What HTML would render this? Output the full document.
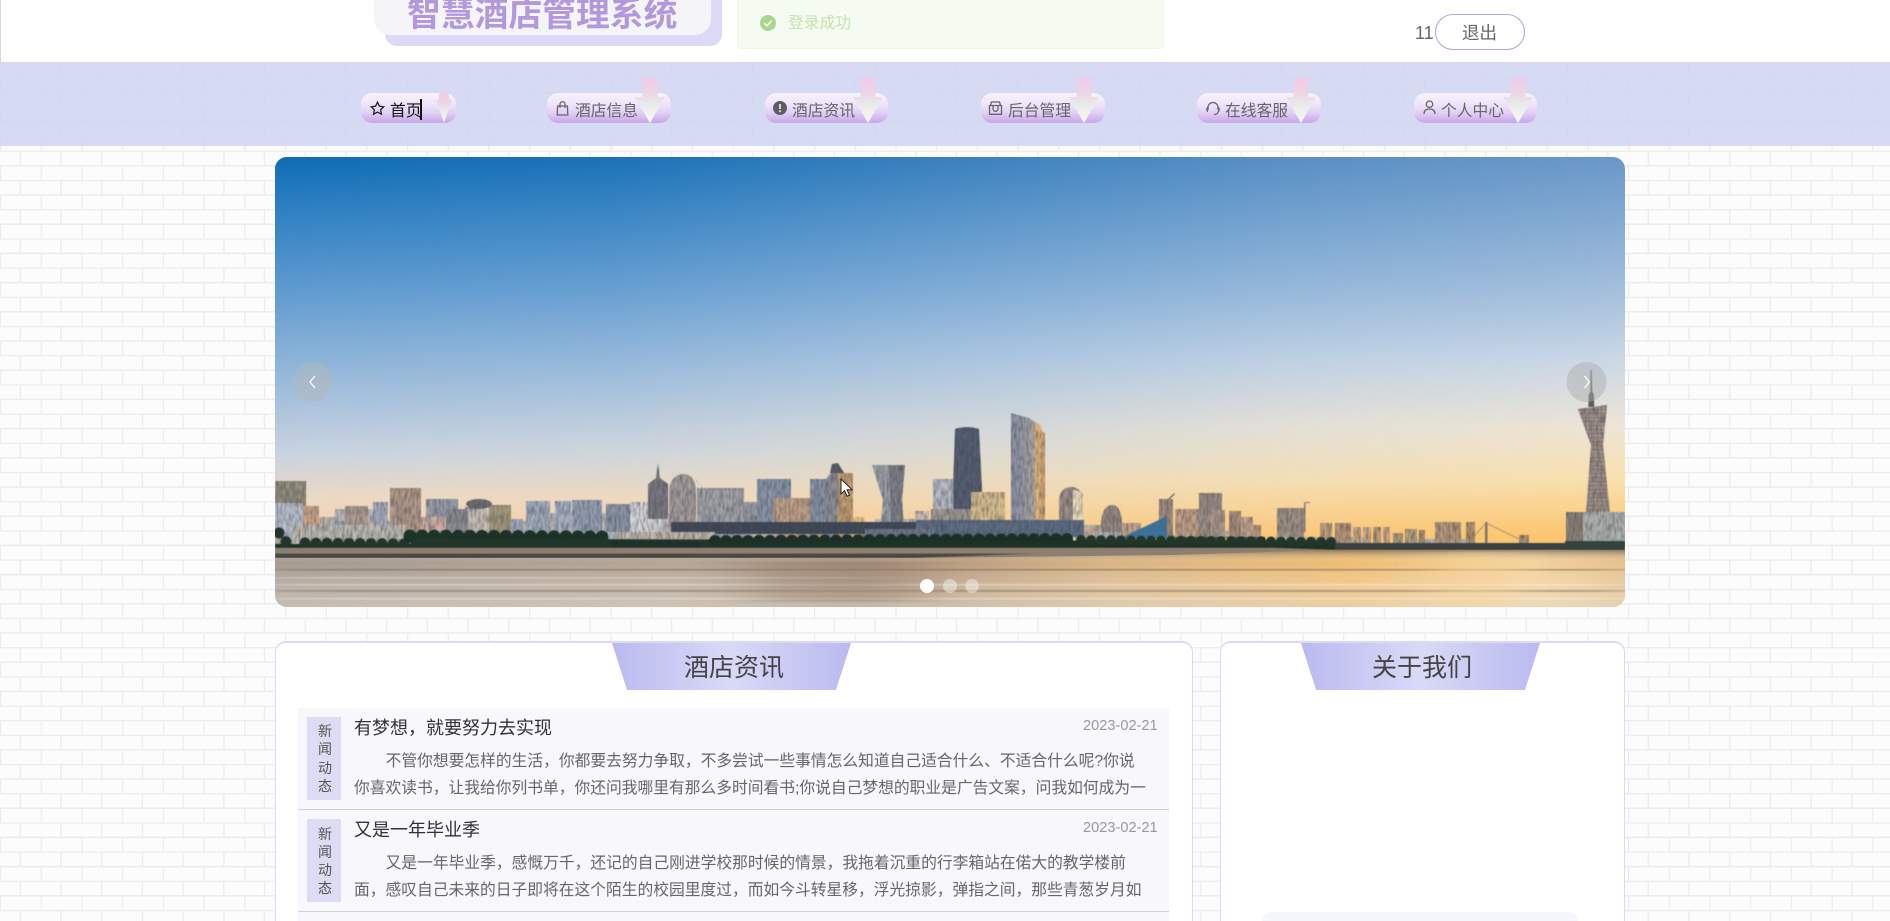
<!DOCTYPE html>
<html lang="zh-CN"><head><meta charset="utf-8"><title>智慧酒店管理系统</title>
<style>
*{box-sizing:border-box}
html,body{margin:0;padding:0;width:1890px;height:921px;overflow:hidden;background:#fcfcfc}
body{position:relative;font-family:"Liberation Sans","Noto Sans CJK SC",sans-serif;color:#666}
.a{position:absolute}
.t{position:absolute;white-space:nowrap;line-height:1}
.pill{position:absolute;top:93px;height:30px;border-radius:11px;background:linear-gradient(180deg,#f8f2fd 0%,#f0e6fb 35%,#e2d0f5 65%,#c6a6e8 100%)}
.arrow{position:absolute;top:78px;width:30px;height:45px;clip-path:polygon(25% 0,75% 0,75% 42%,100% 42%,50% 100%,0 42%,25% 42%);background:linear-gradient(180deg,#f0cbe7 0%,#ecd6e6 35%,#e8e8e8 55%,#f8fbf8 100%);border-radius:6px}
.ic{position:absolute;fill:none;stroke:#666;stroke-width:1.3}
.nt{position:absolute;top:104px;font-size:15.75px;line-height:16px;white-space:nowrap;color:#666}
.card{position:absolute;top:641px;height:300px;background:#fff;border:1px solid #dcd9f3;border-top:2px solid #dcd9f3;border-radius:11px}
.trap{position:absolute;top:643px;height:47px}
.ttl{position:absolute;top:654px;font-size:25px;line-height:28px;color:#444;white-space:nowrap;transform:translateX(-50%)}
.row{position:absolute;left:298px;width:871px;background:#f7f7fc;border-bottom:1px solid #cfcfd6}
.badge{position:absolute;left:307px;width:34px;background:#dcdcf5}
.bt{position:absolute;left:318px;width:14px;font-size:14px;line-height:14px;color:#555}
.h{position:absolute;left:354px;font-size:18px;line-height:20px;color:#333;white-space:nowrap}
.d{position:absolute;left:1083px;font-size:14.6px;line-height:16px;color:#999;white-space:nowrap}
.p{position:absolute;left:354px;font-size:15.75px;line-height:18px;color:#666;white-space:nowrap}
.dot{position:absolute;top:579px;width:14px;height:14px;border-radius:50%;background:rgba(255,255,255,.42)}
</style></head><body>

<!-- brick background -->
<svg class="a" style="left:0;top:0" width="1890" height="921">
<defs>
<pattern id="br" patternUnits="userSpaceOnUse" x="0" y="4.7" width="40.7" height="29.2"><path d="M0 .5H40.7M0 15.1H40.7M20.35 0V14.6M.5 14.6V29.2" fill="none" stroke="#ececec" stroke-width="1.4"/></pattern>
<pattern id="br2" patternUnits="userSpaceOnUse" x="0" y="4.7" width="40.7" height="29.2"><path d="M0 .5H40.7M0 15.1H40.7M20.35 0V14.6M.5 14.6V29.2" fill="none" stroke="#d3d7f0" stroke-width="1"/></pattern>
</defs>
<rect x="0" y="146" width="1890" height="775" fill="#fcfcfc"/>
<rect x="0" y="146" width="1890" height="775" fill="url(#br)"/>
<rect x="0" y="0" width="1890" height="62" fill="#fff"/>
<rect x="0" y="0" width="1" height="62" fill="#ddd"/>
<rect x="0" y="62" width="1890" height="84" fill="#d6daf2"/>
<rect x="0" y="62" width="1890" height="84" fill="url(#br2)"/>
</svg>

<!-- header -->
<div class="a" style="left:385px;top:-20px;width:337px;height:66px;background:#dcdaf6;border-radius:0 0 12px 12px"></div>
<div class="a" style="left:374px;top:-20px;width:337px;height:55px;background:#f5f5f8;border-radius:0 0 16px 16px"></div>
<div class="t" style="left:407px;top:-2px;font-size:33.8px;line-height:34px;font-weight:700;color:#b298dc">智慧酒店管理系统</div>
<div class="a" style="left:737px;top:-20px;width:427px;height:69px;background:#f5fbf1;border:1px solid #eef8e8;border-radius:4px"></div>
<svg class="a" style="left:760px;top:15px" width="16" height="16" viewBox="0 0 16 16"><circle cx="8" cy="8" r="8" fill="#a9d68e"/><path d="M4.3 8.2l2.6 2.6 4.8-5" fill="none" stroke="#f2faec" stroke-width="1.7"/></svg>
<div class="t" style="left:788px;top:16px;font-size:15.8px;line-height:16px;color:#c2e3b1">登录成功</div>
<div class="t" style="left:1415px;top:23px;font-size:18px;line-height:20px;color:#666">11</div>
<div class="a" style="left:1435px;top:14px;width:90px;height:36px;border:1px solid #b3a2d2;border-radius:18px;background:#fff"></div>
<div class="t" style="left:1462px;top:23px;font-size:17.5px;line-height:20px;color:#666">退出</div>

<!-- nav -->
<div class="pill" style="left:361px;width:95px"></div>
<div class="pill" style="left:547px;width:124px"></div>
<div class="pill" style="left:765px;width:123px"></div>
<div class="pill" style="left:981px;width:124px"></div>
<div class="pill" style="left:1197px;width:124px"></div>
<div class="pill" style="left:1414px;width:123px"></div>

<svg class="ic" style="left:370px;top:101px;stroke:#222" width="15" height="15" viewBox="0 0 15 15"><path d="M7.5 1.2l1.9 4 4.3.6-3.1 3 .8 4.4-3.9-2.1-3.9 2.1.8-4.4-3.1-3 4.3-.6z"/></svg>
<div class="nt" style="left:390px;color:#111">首页</div>
<div class="a" style="left:420px;top:99px;width:2px;height:21px;background:#111"></div>

<svg class="ic" style="left:556px;top:101px" width="13" height="15" viewBox="0 0 13 15"><path d="M1.6 5h9.8l.4 9H1.2zM4 7V3.2a2.5 2.5 0 0 1 5 0V7"/></svg>
<div class="nt" style="left:575px">酒店信息</div>

<svg class="a" style="left:773px;top:101px" width="14" height="14" viewBox="0 0 14 14"><circle cx="7" cy="7" r="7" fill="#5f5f63"/><path d="M7 3v5" stroke="#eee" stroke-width="1.7"/><circle cx="7" cy="10.3" r="1" fill="#eee"/></svg>
<div class="nt" style="left:792px">酒店资讯</div>

<svg class="ic" style="left:988px;top:101px" width="15" height="14" viewBox="0 0 15 14"><path d="M1.5 4.5h12v8.800h-12zM2.500 4.500l1-3.500h8l1 3.500M5 4.500v3.300a2.500 2.500 0 0 0 5 0V4.500"/></svg>
<div class="nt" style="left:1008px">后台管理</div>

<svg class="ic" style="left:1206px;top:101px" width="14" height="15" viewBox="0 0 14 15"><path d="M2 9V6.500a5 5 0 0 1 10 0V9M2 6.500c-1.500 0-1.500 4 0 4M12 6.500c1.500 0 1.500 4 0 4M12 10.500c0 2-2 3-4 3"/></svg>
<div class="nt" style="left:1225px">在线客服</div>

<svg class="ic" style="left:1423px;top:100px" width="13" height="15" viewBox="0 0 13 15"><circle cx="6.500" cy="4.200" r="3.200"/><path d="M1 14c0-3.500 2-5 5.500-5s5.500 1.500 5.500 5"/></svg>
<div class="nt" style="left:1441px">个人中心</div>

<div class="arrow" style="left:436px;top:93px;width:16px;height:30px;clip-path:polygon(18% 0,82% 0,82% 22%,100% 22%,50% 100%,0 22%,18% 22%)"></div>
<div class="arrow" style="left:635px"></div>
<div class="arrow" style="left:853px"></div>
<div class="arrow" style="left:1069px"></div>
<div class="arrow" style="left:1286px"></div>
<div class="arrow" style="left:1503px"></div>

<!-- hero -->
<svg class="a" style="left:275px;top:157px;border-radius:12px" width="1350" height="450" viewBox="0 0 1350 450">
<defs>
<linearGradient id="skL" x1="0" y1="0" x2="0" y2="1"><stop offset="0" stop-color="#0e6cb4"/><stop offset=".12" stop-color="#2f80c2"/><stop offset=".3" stop-color="#609bd0"/><stop offset=".5" stop-color="#9abada"/><stop offset=".66" stop-color="#c9d3e0"/><stop offset=".76" stop-color="#ecd8c4"/><stop offset=".86" stop-color="#f7cfa0"/></linearGradient>
<linearGradient id="skR" x1="0" y1="0" x2="0" y2="1"><stop offset="0" stop-color="#6b98c9"/><stop offset=".12" stop-color="#81a8d1"/><stop offset=".3" stop-color="#a5c0dd"/><stop offset=".45" stop-color="#cbd8e7"/><stop offset=".6" stop-color="#eee5d6"/><stop offset=".72" stop-color="#f9e0ae"/><stop offset=".84" stop-color="#fcc66e"/></linearGradient>
<linearGradient id="hm" x1="0" y1="0" x2="1" y2="0"><stop offset="0" stop-color="#000"/><stop offset=".25" stop-color="#333"/><stop offset=".75" stop-color="#ddd"/><stop offset="1" stop-color="#fff"/></linearGradient>
<mask id="mk"><rect width="1350" height="450" fill="url(#hm)"/></mask>
<linearGradient id="wa" x1="0" y1="0" x2="1" y2="0"><stop offset="0" stop-color="#a59a90"/><stop offset=".3" stop-color="#b5a594"/><stop offset=".43" stop-color="#a68f7c"/><stop offset=".62" stop-color="#d9b484"/><stop offset=".8" stop-color="#f0bd72"/><stop offset=".93" stop-color="#f5d29a"/><stop offset="1" stop-color="#e5c08a"/></linearGradient>
<linearGradient id="wv" x1="0" y1="0" x2="0" y2="1"><stop offset="0" stop-color="#3a3530" stop-opacity=".5"/><stop offset=".22" stop-color="#fff" stop-opacity="0"/><stop offset="1" stop-color="#e8e0d4" stop-opacity=".5"/></linearGradient>
<linearGradient id="tw" x1="0" y1="0" x2="1" y2="0"><stop offset="0" stop-color="#8a92a6"/><stop offset=".6" stop-color="#a8a4a6"/><stop offset=".78" stop-color="#edbf7c"/><stop offset="1" stop-color="#c89a70"/></linearGradient>
<filter id="bl" filterUnits="userSpaceOnUse" x="-100" y="380" width="1550" height="80"><feGaussianBlur stdDeviation="28 .5"/></filter>
<filter id="nz" filterUnits="userSpaceOnUse" x="0" y="200" width="1350" height="210" color-interpolation-filters="sRGB">
<feTurbulence type="fractalNoise" baseFrequency="0.5 0.12" numOctaves="2" seed="4" result="n"/>
<feColorMatrix in="n" type="matrix" values="0 0 0 0 0.2  0 0 0 0 0.22  0 0 0 0 0.28  1.1 0 0 0 -0.38" result="d"/>
<feComposite in="d" in2="SourceAlpha" operator="in" result="dd"/>
<feMerge result="m"><feMergeNode in="SourceGraphic"/><feMergeNode in="dd"/></feMerge>
<feGaussianBlur in="m" stdDeviation=".55"/>
</filter>
<filter id="b2"><feGaussianBlur stdDeviation=".45"/></filter>
<pattern id="win" patternUnits="userSpaceOnUse" width="4" height="4"><rect width="4" height="1.2" fill="#000" opacity=".14"/><rect width="1" height="4" fill="#fff" opacity=".08"/></pattern>
</defs>
<rect width="1350" height="450" fill="url(#skR)"/>
<rect width="1350" height="450" fill="url(#skL)" mask="url(#mk)" transform="scale(-1 1) translate(-1350 0)"/>

<g filter="url(#nz)">
<!-- low dense base -->
<path d="M0 375V360h60v-8h50v12h150v-8h140v10h200v-4h120v6h130v10h60v-4h60v10h30v-4h90v8h50v-6h60v10h40v-4h50v20H0z" fill="#b5b4b8" opacity=".85"/>
<!-- far buildings -->
<rect x="44" y="362" width="12" height="20" fill="#c6b5a8"/><rect x="60" y="364" width="10" height="20" fill="#9ea4b2"/><rect x="70" y="349" width="23" height="34" fill="#b4a092"/>
<rect x="98" y="345" width="15" height="38" fill="#a9b0c0"/>
<rect x="151" y="342" width="32" height="46" fill="#9aa1ad"/><rect x="190" y="350" width="12" height="40" fill="#8e8f96"/>
<rect x="205" y="352" width="12" height="36" fill="#d4c8b8"/><rect x="214" y="348" width="22" height="38" fill="#a69a7b"/><rect x="236" y="362" width="12" height="26" fill="#a3afc0"/>
<rect x="251" y="344" width="24" height="50" fill="#a4aebd"/><rect x="280" y="344" width="16" height="50" fill="#a9b3c3"/><rect x="297" y="343" width="30" height="50" fill="#98a2b3"/><rect x="331" y="347" width="24" height="46" fill="#8f98a8"/><rect x="355" y="345" width="32" height="40" fill="#d8d8d8"/>
<rect x="240" y="375" width="130" height="18" fill="#b5bfcf"/>
<rect x="0" y="324" width="31" height="50" fill="#96907e"/>
<rect x="0" y="346" width="28" height="34" fill="#bcc3cf"/><rect x="28" y="349" width="16" height="30" fill="#d2a98b"/>
<rect x="115" y="331" width="31" height="60" fill="#b39b8a"/><rect x="146" y="360" width="25" height="30" fill="#d1b2a4"/>
<rect x="171" y="352" width="22" height="38" fill="#8d8d90"/><rect x="193" y="352" width="12" height="36" fill="#c8c0b4"/><ellipse cx="204" cy="347" rx="13" ry="5" fill="#6f6e72"/>
<path d="M373 362V327l8-6 2-15 2 15 8 6v35z" fill="#7d7a80"/>
<path d="M394 370V336c0-13 7-19 14-19 9 0 13 7 13 19v34z" fill="#a79e9c"/><path d="M421 322l8 10h-8z" fill="#efe9dd"/>
<rect x="422" y="331" width="47" height="56" fill="#a3a4a8"/>
<rect x="469" y="345" width="14" height="30" fill="#9a9da6"/>
<rect x="482" y="322" width="34" height="50" fill="#8b97a8"/>
<rect x="498" y="341" width="57" height="42" fill="#c3a388"/>
<rect x="535" y="322" width="16" height="50" fill="#8a95a6"/>
<path d="M551 380V322l12-15 10 14 5 2v57z" fill="#8e9096"/><path d="M563 316h15v64h-15z" fill="#c9a16e"/><path d="M557 307l6-1 6 10h-14z" fill="#5d5f68"/>
<rect x="578" y="360" width="12" height="18" fill="#f0c684"/><rect x="585" y="368" width="22" height="14" fill="#c5a58e"/>
<path d="M597 308h33l-3 35 2 28-24 2 3-30z" fill="#9fa1a7"/><path d="M614 308h16l-3 35 2 28-13 1z" fill="#7f8288"/>
<rect x="640" y="354" width="14" height="28" fill="#d0c1b5"/>
<rect x="658" y="322" width="33" height="50" fill="#b8bdc5"/>
<path d="M680 272c8-3 18-2 24 0l3 60 1 44h-29l-1-44z" fill="#565f70"/>
<rect x="656" y="352" width="42" height="36" fill="#a39a93"/>
<rect x="696" y="335" width="34" height="52" fill="#dcc08e"/>
<path d="M736 256l18 5 12 8 1 6 3 1v110h-34z" fill="url(#tw)"/>
<rect x="728" y="368" width="50" height="20" fill="#c8b5a2"/>
<path d="M784 344c0-10 6-14 12-14s12 4 12 14v42h-24z" fill="#9f9088"/><path d="M798 332l10 4v50h-10z" fill="#f3e2bf"/>
<rect x="808" y="370" width="18" height="16" fill="#c9b39d"/>
<path d="M826 370c0-16 5-22 11-22s10 6 10 22v26h-21z" fill="#9a8a80"/>
<rect x="847" y="366" width="19" height="24" fill="#c5a98e"/>
<rect x="884" y="342" width="14" height="44" fill="#a6907f"/><path d="M893 342l6-6 1 1-6 6" fill="#777"/>
<rect x="900" y="352" width="25" height="36" fill="#c4a286"/>
<rect x="924" y="336" width="23" height="54" fill="#9c8f84"/><rect x="936" y="353" width="14" height="36" fill="#b09c8c"/>
<rect x="954" y="354" width="12" height="36" fill="#ae8f78"/><rect x="966" y="360" width="12" height="28" fill="#c6a78c"/><rect x="978" y="368" width="8" height="18" fill="#c09d7e"/>
<rect x="1002" y="351" width="27" height="36" fill="#a49486"/><path d="M1029 345h1.5v30h-1.5zM1029 345h6v1h-6z" fill="#a08d7a"/>
<rect x="1045" y="366" width="12" height="24" fill="#c4a27e"/><rect x="1060" y="366" width="16" height="24" fill="#b89878"/>
<rect x="1078" y="370" width="8" height="20" fill="#c9a680"/><rect x="1088" y="370" width="8" height="20" fill="#d0ae88"/><rect x="1098" y="370" width="8" height="20" fill="#c09e7a"/><rect x="1108" y="370" width="7" height="20" fill="#ccaa84"/>
<rect x="1118" y="376" width="10" height="14" fill="#b69c7e"/><rect x="1130" y="372" width="12" height="18" fill="#bda27e"/><rect x="1144" y="373" width="6" height="16" fill="#a89070"/>
<rect x="1160" y="365" width="26" height="22" fill="#bc9b7a"/><rect x="1191" y="365" width="9" height="24" fill="#b0906e"/>
<rect x="1244" y="378" width="10" height="10" fill="#b79a78"/>
<!-- canton tower -->
<path d="M1303 252l29-4-4 40 7 68h-24l5-68z" fill="#a08f85"/>
<rect x="1291" y="355" width="59" height="40" fill="#8f8578"/><rect x="1308" y="355" width="42" height="36" fill="#b1b2b0"/>
<!-- mid -->
<rect x="396" y="365" width="245" height="12" fill="#414a58"/>
<rect x="641" y="363" width="168" height="17" fill="#5f6e84"/>
<rect x="590" y="372" width="70" height="14" fill="#6d7888"/>
<rect x="820" y="375" width="26" height="10" fill="#a9bbc8" opacity=".7"/>
<rect x="900" y="380" width="90" height="10" fill="#3f5263"/><rect x="1000" y="380" width="30" height="7" fill="#bcc2c6"/>
<rect x="17" y="368" width="113" height="14" fill="#c0bcb2"/><rect x="145" y="374" width="38" height="7" fill="#a3b8cf"/><rect x="340" y="375" width="100" height="12" fill="#c4b9ac"/>
</g>
<g filter="url(#b2)">
<path d="M846 381l46-22v22z" fill="#3c6f94"/><rect x="945" y="381" width="14" height="7" fill="#dfb44e"/>
<path d="M1315.5 213h1l.8 22 1.5 2 .5 13h-6l.5-13 1.5-2z" fill="#5d5d5f"/>
<path d="M1303 252l29-4-4 40 7 68h-24l5-68z" fill="url(#win)"/>
<rect x="1210" y="365" width="2.5" height="26" fill="#7f7566"/><path d="M1211 366L1248 384M1211 366L1195 384" stroke="#9b8a72" stroke-width=".8" fill="none"/>
<!-- trees -->
<path d="M0 387h1060v6H0z" fill="#1e3027"/>
<path d="M4 376L12 386M30 386L130 387" stroke="#20342a" stroke-width="11" stroke-linecap="round" stroke-dasharray="0 11" fill="none"/>
<path d="M135 379L335 380" stroke="#1d3026" stroke-width="13" stroke-linecap="round" stroke-dasharray="0 12" fill="none"/>
<path d="M140 386L440 387" stroke="#22362b" stroke-width="9" stroke-linecap="round" fill="none"/>
<path d="M340 388L430 388" stroke="#1d3026" stroke-width="9" stroke-linecap="round" stroke-dasharray="0 9" fill="none"/>
<path d="M440 384L800 382" stroke="#1b2e25" stroke-width="12" stroke-linecap="round" stroke-dasharray="0 11" fill="none"/>
<path d="M440 388L1055 388" stroke="#1f3228" stroke-width="9" fill="none"/>
<path d="M806 383L1060 385" stroke="#223528" stroke-width="10" stroke-linecap="round" stroke-dasharray="0 10" fill="none"/>
<rect x="1060" y="386" width="290" height="7" fill="#3a4042"/><rect x="1290" y="384" width="60" height="8" fill="#33443e"/>
<path d="M0 391h1000l60 2-60 5-300 3H0z" fill="#8d7f70"/>
<path d="M0 396.5h760l-120 4.500H0z" fill="#4c4640"/>
</g>
<!-- water -->
<path d="M0 401L640 401 900 398 1060 393H1350V450H0z" fill="url(#wa)"/>
<path d="M0 401L640 401 900 398 1060 393H1350V450H0z" fill="url(#wv)"/>
<g filter="url(#bl)" opacity=".6">
<rect x="0" y="412" width="1350" height="1.5" fill="#70665c"/><rect x="0" y="420" width="600" height="2" fill="#d8cdc0"/><rect x="0" y="427" width="1350" height="1.5" fill="#fff" opacity=".6"/><rect x="0" y="433" width="1350" height="2" fill="#8a7a6a"/><rect x="0" y="441" width="1350" height="1.5" fill="#fff" opacity=".6"/><rect x="480" y="405" width="170" height="40" fill="#8a7360" opacity=".5"/><rect x="1180" y="395" width="50" height="55" fill="#f6d59a" opacity=".8"/>
</g>
<!-- carousel arrows -->
<circle cx="38" cy="225" r="20" fill="#b4b8bc" opacity=".5"/>
<path d="M40 219l-5 6 5 6" fill="none" stroke="#fff" stroke-width="1.2"/>
<circle cx="1311.5" cy="225" r="20" fill="#a8aaaa" opacity=".45"/>
<path d="M1309.5 219l5 6-5 6" fill="none" stroke="#fff" stroke-width="1.2"/>
</svg>
<div class="dot" style="left:920px;background:#fff"></div>
<div class="dot" style="left:943px"></div>
<div class="dot" style="left:965px"></div>
<svg class="a" style="left:840px;top:478px" width="14" height="20" viewBox="0 0 14 20"><path d="M1 1v15l3.6-3.4 2.4 5.600 2.500-1-2.500-5.500h5z" fill="#fff" stroke="#222" stroke-width="1"/></svg>

<!-- left card -->
<div class="card" style="left:275px;width:918px"></div>
<div class="trap" style="left:612px;width:239px;clip-path:polygon(0 0,100% 0,93.7% 100%,6.3% 100%);background:linear-gradient(90deg,#babaf0,#d9d9f7 50%,#babaf0)"></div>
<div class="ttl" style="left:734px">酒店资讯</div>

<div class="row" style="top:708px;height:102px"></div>
<div class="row" style="top:810px;height:102px"></div>
<div class="row" style="top:912px;height:20px;border:0"></div>

<div class="badge" style="top:717px;height:83px"></div>
<div class="bt" style="top:724px">新</div><div class="bt" style="top:742px">闻</div><div class="bt" style="top:761px">动</div><div class="bt" style="top:779px">态</div>
<div class="h" style="top:718px">有梦想，就要努力去实现</div>
<div class="d" style="top:718px">2023-02-21</div>
<div class="p" style="top:753px;left:385.6px">不管你想要怎样的生活，你都要去努力争取，不多尝试一些事情怎么知道自己适合什么、不适合什么呢?你说</div>
<div class="p" style="top:780px">你喜欢读书，让我给你列书单，你还问我哪里有那么多时间看书;你说自己梦想的职业是广告文案，问我如何成为一</div>

<div class="badge" style="top:819px;height:83px"></div>
<div class="bt" style="top:827px">新</div><div class="bt" style="top:845px">闻</div><div class="bt" style="top:863px">动</div><div class="bt" style="top:881px">态</div>
<div class="h" style="top:820px">又是一年毕业季</div>
<div class="d" style="top:820px">2023-02-21</div>
<div class="p" style="top:855px;left:385.6px">又是一年毕业季，感慨万千，还记的自己刚进学校那时候的情景，我拖着沉重的行李箱站在偌大的教学楼前</div>
<div class="p" style="top:882px">面，感叹自己未来的日子即将在这个陌生的校园里度过，而如今斗转星移，浮光掠影，弹指之间，那些青葱岁月如</div>

<!-- right card -->
<div class="card" style="left:1220px;width:405px"></div>
<div class="trap" style="left:1301px;width:239px;clip-path:polygon(0 0,100% 0,93.7% 100%,6.3% 100%);background:linear-gradient(90deg,#babaf0,#d9d9f7 50%,#babaf0)"></div>
<div class="ttl" style="left:1422px">关于我们</div>
<div class="a" style="left:1262px;top:912px;width:316px;height:20px;background:#f6f6fd;border-radius:8px"></div>
</body></html>
